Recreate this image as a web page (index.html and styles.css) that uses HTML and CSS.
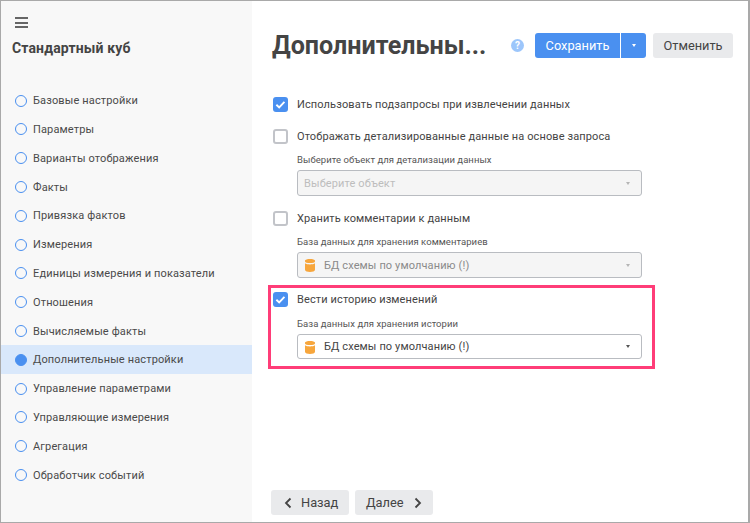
FILE: index.html
```html
<!DOCTYPE html>
<html lang="ru">
<head>
<meta charset="utf-8">
<title>Стандартный куб</title>
<link rel="stylesheet" href="styles.css">
</head>
<body>
<div class="frame">
  <aside class="sidebar">
    <div class="burger"><span></span><span></span><span></span></div>
    <div class="cube-title">Стандартный куб</div>
    <nav class="nav">
      <div class="nav-item"><i class="dot"></i>Базовые настройки</div>
      <div class="nav-item"><i class="dot"></i>Параметры</div>
      <div class="nav-item"><i class="dot"></i>Варианты отображения</div>
      <div class="nav-item"><i class="dot"></i>Факты</div>
      <div class="nav-item"><i class="dot"></i>Привязка фактов</div>
      <div class="nav-item"><i class="dot"></i>Измерения</div>
      <div class="nav-item"><i class="dot"></i>Единицы измерения и показатели</div>
      <div class="nav-item"><i class="dot"></i>Отношения</div>
      <div class="nav-item"><i class="dot"></i>Вычисляемые факты</div>
      <div class="nav-item active"><i class="dot"></i>Дополнительные настройки</div>
      <div class="nav-item"><i class="dot"></i>Управление параметрами</div>
      <div class="nav-item"><i class="dot"></i>Управляющие измерения</div>
      <div class="nav-item"><i class="dot"></i>Агрегация</div>
      <div class="nav-item"><i class="dot"></i>Обработчик событий</div>
    </nav>
  </aside>
  <main class="main">
    <header class="header">
      <h1 class="title">Дополнительны...</h1>
      <span class="help">?</span>
      <button class="btn primary save">Сохранить</button>
      <button class="btn primary split"><i class="caret caret-white"></i></button>
      <button class="btn plain cancel">Отменить</button>
    </header>
    <section class="form">
      <label class="check-row first"><i class="box on"><svg viewBox="0 0 16 16" width="15" height="15"><path d="M3.6 8.300l3 2.900 5.600-6" fill="none" stroke="#fff" stroke-width="2"/></svg></i>Использовать подзапросы при извлечении данных</label>
      <label class="check-row second"><i class="box"></i>Отображать детализированные данные на основе запроса</label>
      <div class="field-label">Выберите объект для детализации данных</div>
      <div class="select disabled"><span class="placeholder">Выберите объект</span><i class="caret"></i></div>
      <label class="check-row third"><i class="box"></i>Хранить комментарии к данным</label>
      <div class="field-label">База данных для хранения комментариев</div>
      <div class="select disabled"><svg class="db" viewBox="0 0 10 14" width="10" height="14"><path d="M0 2.500C0 .4 10 .4 10 2.500V3.400C10 5.400 0 5.400 0 3.400zM0 5.200C2 6.800 8 6.800 10 5.200V11.800C10 14.700 0 14.700 0 11.800z" fill="#f7a63c"/></svg><span class="value">БД схемы по умолчанию (!)</span><i class="caret"></i></div>
      <div class="highlight">
        <label class="check-row"><i class="box on"><svg viewBox="0 0 16 16" width="15" height="15"><path d="M3.6 8.300l3 2.900 5.600-6" fill="none" stroke="#fff" stroke-width="2"/></svg></i>Вести историю изменений</label>
        <div class="field-label">База данных для хранения истории</div>
        <div class="select"><svg class="db" viewBox="0 0 10 14" width="10" height="14"><path d="M0 2.500C0 .4 10 .4 10 2.500V3.400C10 5.400 0 5.400 0 3.400zM0 5.200C2 6.800 8 6.800 10 5.200V11.800C10 14.700 0 14.700 0 11.800z" fill="#f7a63c"/></svg><span class="value">БД схемы по умолчанию (!)</span><i class="caret dark"></i></div>
      </div>
    </section>
    <footer class="footer">
      <button class="btn plain nav-btn"><svg viewBox="0 0 10 12" width="10" height="12"><path d="M8.500 1.500L4 6l4.500 4.500" fill="none" stroke="#444" stroke-width="1.800"/></svg>Назад</button>
      <button class="btn plain nav-btn">Далее<svg viewBox="0 0 10 12" width="10" height="12"><path d="M2.500 1.500L7 6l-4.500 4.500" fill="none" stroke="#444" stroke-width="1.800"/></svg></button>
    </footer>
  </main>
</div>
</body>
</html>
```
FILE: styles.css
```css
* { box-sizing: border-box; }
html, body { margin: 0; padding: 0; }
body { font-family: Roboto, "Liberation Sans", sans-serif; color: #444; background: #fff; }
.frame { width: 750px; height: 523px; display: flex; border: 1px solid #a9a9a9; border-width: 1px 2px 1px 1px; overflow: hidden; }
.sidebar { width: 251px; flex: none; background: #f8f8f8; display: flex; flex-direction: column; }
.burger { margin: 16px 0 0 14px; width: 13px; height: 11px; display: flex; flex-direction: column; justify-content: space-between; }
.burger span { display: block; height: 2px; background: #666; }
.cube-title { margin: 11px 0 0 11px; font-size: 14px; font-weight: 700; line-height: 18px; color: #444; letter-spacing: 0.14px; }
.nav { margin-top: 29.300px; }
.nav-item { height: 28.800px; display: flex; align-items: center; padding-left: 14px; font-size: 11px; color: #4a4a4a; letter-spacing: 0.14px; }
.dot { width: 12px; height: 12px; border: 1px solid #4a90f0; border-radius: 50%; margin-right: 6px; flex: none; }
.nav-item.active { background: #d9e8fb; }
.active .dot { background: #4a90f0; }
.main { flex: 1; display: flex; flex-direction: column; padding: 0 0 0 20px; min-width: 0; }
.header { display: flex; align-items: center; height: 25px; margin-top: 32px; }
.title { margin: -1px 0 0; font-size: 25.100px; font-weight: 700; line-height: 25px; width: 239px; white-space: nowrap; color: #444; }
.help { width: 13px; height: 13px; border-radius: 50%; background: #9cc6fb; color: #fff; font-size: 10px; font-weight: 700; line-height: 13px; text-align: center; }
.btn { font-family: inherit; border: 0; border-radius: 3px; font-size: 12.800px; height: 25px; padding: 0; }
.primary { background: #4a90f0; color: #fff; }
.plain { background: #e9eaec; color: #444; }
.save { width: 85px; margin-left: 11px; border-radius: 3px 0 0 3px; }
.split { width: 25px; margin-left: 1px; border-radius: 0 3px 3px 0; display: flex; align-items: center; justify-content: center; }
.cancel { width: 80px; margin-left: 7px; }
.form { display: flex; flex-direction: column; margin-top: 38px; }
.check-row { display: flex; align-items: center; height: 16px; font-size: 11px; color: #444; letter-spacing: 0.12px; }
.check-row.second { margin-top: 16px; }
.check-row.third { margin-top: 14px; }
.box { width: 15px; height: 15px; border: 2px solid #c2c4c9; border-radius: 3px; margin: 0 9px 0 1px; flex: none; background: #fff; }
.box.on { border: 0; background: #4a90f0; }
.box svg { display: block; }
.field-label { margin: 10px 0 0 25px; font-size: 9.500px; line-height: 12px; color: #555; letter-spacing: 0.05px; }
.select { margin: 4px 0 0 25px; width: 345px; height: 26px; border: 1px solid #b9bcc1; border-radius: 3px; display: flex; align-items: center; padding: 0 11px 0 6px; font-size: 11px; color: #444; letter-spacing: 0.12px; }
.select.disabled { background: #f5f5f5; color: #8a8a8a; }
.placeholder { color: #bdbdbd; flex: 1; }
.db { margin: 0 8px 0 1px; flex: none; }
.value { flex: 1; padding-left: 1px; }
.caret { width: 0; height: 0; border-left: 2.500px solid transparent; border-right: 2.500px solid transparent; border-top: 3px solid #b5b5b5; }
.caret.dark { border-top-color: #555; }
.caret-white { border-top-color: #fff; }
.highlight { margin: 7px 0 0 -4px; padding: 3px 10px 5px 1px; width: 387px; height: 84px; border: 3px solid #ff3d78; }
.highlight .field-label { margin-top: 11px; }
.highlight .select { height: 25px; margin-top: 4px; }
.footer { margin: auto 0 7px -1px; display: flex; gap: 6px; }
.nav-btn { width: 78px; display: flex; align-items: center; gap: 9px; padding-left: 11px; }
```
